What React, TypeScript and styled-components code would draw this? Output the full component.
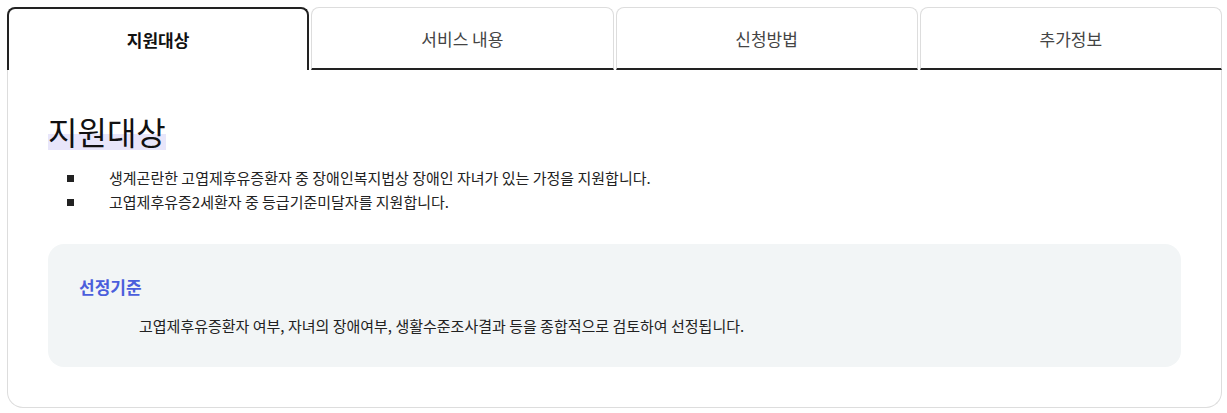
import { useState } from "react";
import styled, { createGlobalStyle } from "styled-components";

const GlobalStyle = createGlobalStyle`
  body {
    margin: 0;
    background: #ffffff;
    font-family: "Noto Sans CJK KR", "Noto Sans", sans-serif;
    color: #222222;
  }
`;

const Wrap = styled.div`
  padding: 7px 5px 6px 7px;
`;

const TabList = styled.div`
  display: grid;
  grid-template-columns: repeat(4, 1fr);
  column-gap: 2px;
`;

const Tab = styled.button<{ $active: boolean }>`
  height: 63px;
  box-sizing: border-box;
  font-family: inherit;
  font-size: 17px;
  font-weight: ${(p) => (p.$active ? 700 : 400)};
  color: ${(p) => (p.$active ? "#111111" : "#444444")};
  background: #ffffff;
  border-radius: 8px 8px 0 0;
  border: ${(p) => (p.$active ? "2px solid #222222" : "1px solid #dddddd")};
  border-bottom: ${(p) => (p.$active ? "none" : "2px solid #222222")};
  padding: 0;
  cursor: pointer;
`;

const Panel = styled.div`
  border: 1px solid #dddddd;
  border-top: none;
  border-radius: 0 0 16px 16px;
  padding: 42px 40px 40px 40px;
`;

const Heading = styled.h2`
  display: inline-block;
  margin: 0;
  font-size: 32px;
  font-weight: 400;
  line-height: 38px;
  color: #111111;
  background: linear-gradient(to bottom, transparent 58%, #e8e6fa 58%);
`;

const BulletList = styled.ul`
  list-style: none;
  margin: 16px 0 0 0;
  padding: 0;
`;

const Bullet = styled.li`
  display: flex;
  align-items: center;
  font-size: 15px;
  line-height: 24px;
  color: #222222;

  &::before {
    content: "";
    width: 7px;
    height: 7px;
    background: #222222;
    margin: 0 35px 0 19px;
    flex-shrink: 0;
  }
`;

const InfoBox = styled.section`
  margin-top: 30px;
  background: #f2f5f6;
  border-radius: 16px;
  padding: 31px 31px 29px 31px;
`;

const InfoTitle = styled.h3`
  margin: 0;
  font-size: 17px;
  font-weight: 700;
  line-height: 24px;
  color: #4b5edc;
`;

const InfoText = styled.p`
  margin: 15px 0 0 60px;
  font-size: 15px;
  line-height: 24px;
  color: #222222;
`;

const tabs = ["지원대상", "서비스 내용", "신청방법", "추가정보"];

export default function App() {
  const [active, setActive] = useState(0);

  return (
    <Wrap>
      <GlobalStyle />
      <TabList>
        {tabs.map((t, i) => (
          <Tab key={t} $active={i === active} onClick={() => setActive(i)}>
            {t}
          </Tab>
        ))}
      </TabList>
      <Panel>
        <Heading>지원대상</Heading>
        <BulletList>
          <Bullet>생계곤란한 고엽제후유증환자 중 장애인복지법상 장애인 자녀가 있는 가정을 지원합니다.</Bullet>
          <Bullet>고엽제후유증2세환자 중 등급기준미달자를 지원합니다.</Bullet>
        </BulletList>
        <InfoBox>
          <InfoTitle>선정기준</InfoTitle>
          <InfoText>고엽제후유증환자 여부, 자녀의 장애여부, 생활수준조사결과 등을 종합적으로 검토하여 선정됩니다.</InfoText>
        </InfoBox>
      </Panel>
    </Wrap>
  );
}
